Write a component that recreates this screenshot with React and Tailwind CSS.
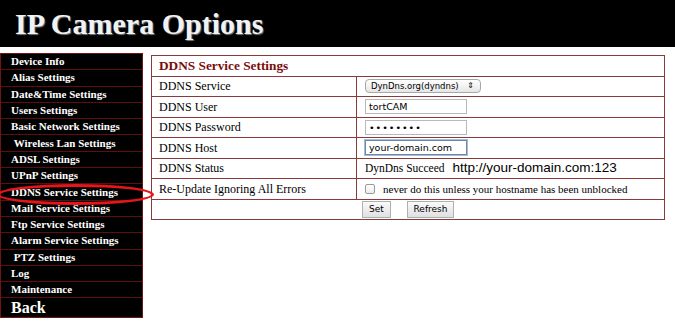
import React from "react";

const menu = [
  "Device Info",
  "Alias Settings",
  "Date&Time Settings",
  "Users Settings",
  "Basic Network Settings",
  "\u00a0Wireless Lan Settings",
  "ADSL Settings",
  "UPnP Settings",
  "DDNS Service Settings",
  "Mail Service Settings",
  "Ftp Service Settings",
  "Alarm Service Settings",
  "\u00a0PTZ Settings",
  "Log",
  "Maintenance",
];

function Row({ label, children }) {
  return (
    <div className="flex h-[20.5px] border-t border-[#8b3a3a]">
      <div className="w-[205px] shrink-0 border-r border-[#8b3a3a] pl-[7px] flex items-center text-[12px] text-black">
        {label}
      </div>
      <div className="flex-1 pl-[8px] flex items-center">{children}</div>
    </div>
  );
}

const inputCls =
  "w-[102px] h-[15px] border border-[#b9b9b9] bg-white px-[3px] text-[9.5px] leading-[13px] font-['DejaVu_Sans',sans-serif] text-black outline-none";

const btnCls =
  "h-[17px] border border-[#b0b0b0] bg-gradient-to-b from-[#fafafa] to-[#e0e0e0] text-[9px] font-['DejaVu_Sans',sans-serif] text-black leading-none";

export default function App() {
  return (
    <div className="relative w-[675px] h-[323px] overflow-hidden bg-white font-['Liberation_Serif',serif]">
      {/* HEADER */}
      <div className="h-[47px] bg-black pl-[15px] flex items-center">
        <h1 className="text-[30px] font-bold text-[#f2f2f2] leading-none [text-shadow:1px_1px_1px_#777]">
          IP Camera Options
        </h1>
      </div>

      <div className="flex items-start">
        {/* SIDEBAR */}
        <div className="mt-[6px] w-[143px] bg-black border border-[#6e1616]">
          {menu.map((m) => (
            <div
              key={m}
              className="h-[16.3px] border-b border-[#5c0f0f] pl-[10px] flex items-center text-[11px] font-bold text-white leading-none whitespace-pre"
            >
              {m}
            </div>
          ))}
          <div className="h-[19px] pl-[10px] flex items-center text-[16px] font-bold text-white leading-none">
            Back
          </div>
        </div>

        {/* MAIN */}
        <div className="ml-[8px] mt-[8px] w-[514px] border-x border-b border-[#8b3a3a]">
          <div className="h-[20.5px] border-t border-[#8b3a3a] pl-[7px] flex items-center text-[13.3px] font-bold text-[#7a0c0c]">
            DDNS Service Settings
          </div>
          <Row label="DDNS Service">
            <div className="w-[116px] h-[14px] rounded-[4px] border border-[#a8a8a8] bg-gradient-to-b from-white to-[#e6e6e6] flex items-center justify-between pl-[5px] pr-[6px] text-[8.5px] font-['DejaVu_Sans',sans-serif] text-black leading-none">
              <span>DynDns.org(dyndns)</span>
              <span className="text-[8px]">&#8661;</span>
            </div>
          </Row>
          <Row label="DDNS User">
            <input className={inputCls} defaultValue="tortCAM" readOnly />
          </Row>
          <Row label="DDNS Password">
            <input className={inputCls + " text-[8px] tracking-[1px]"} type="password" defaultValue="password" readOnly />
          </Row>
          <Row label="DDNS Host">
            <input
              className={inputCls + " !border-[#6f88a8] shadow-[0_0_0_1px_#a9bcd6]"}
              defaultValue="your-domain.com"
              readOnly
            />
          </Row>
          <Row label="DDNS Status">
            <span className="text-[11.5px] text-black">DynDns Succeed</span>
            <span className="ml-[8px] text-[13.5px] text-black font-['Liberation_Sans',sans-serif]">
              http://your-domain.com:123
            </span>
          </Row>
          <Row label="Re-Update Ignoring All Errors">
            <span className="w-[10px] h-[10px] rounded-[2px] border border-[#9a9a9a] bg-gradient-to-b from-white to-[#ececec] mr-[8px]" />
            <span className="text-[11px] text-black">
              never do this unless your hostname has been unblocked
            </span>
          </Row>
          <div className="h-[20.5px] border-t border-[#8b3a3a] flex items-center justify-center gap-[16px]">
            <button className={btnCls + " w-[29px]"}>Set</button>
            <button className={btnCls + " w-[47px]"}>Refresh</button>
          </div>
        </div>
      </div>

      {/* highlight ring */}
      <div className="absolute left-[-3px] top-[184px] w-[157px] h-[21px] rounded-[50%] border-[3px] border-[#e8141c] pointer-events-none" />
    </div>
  );
}
